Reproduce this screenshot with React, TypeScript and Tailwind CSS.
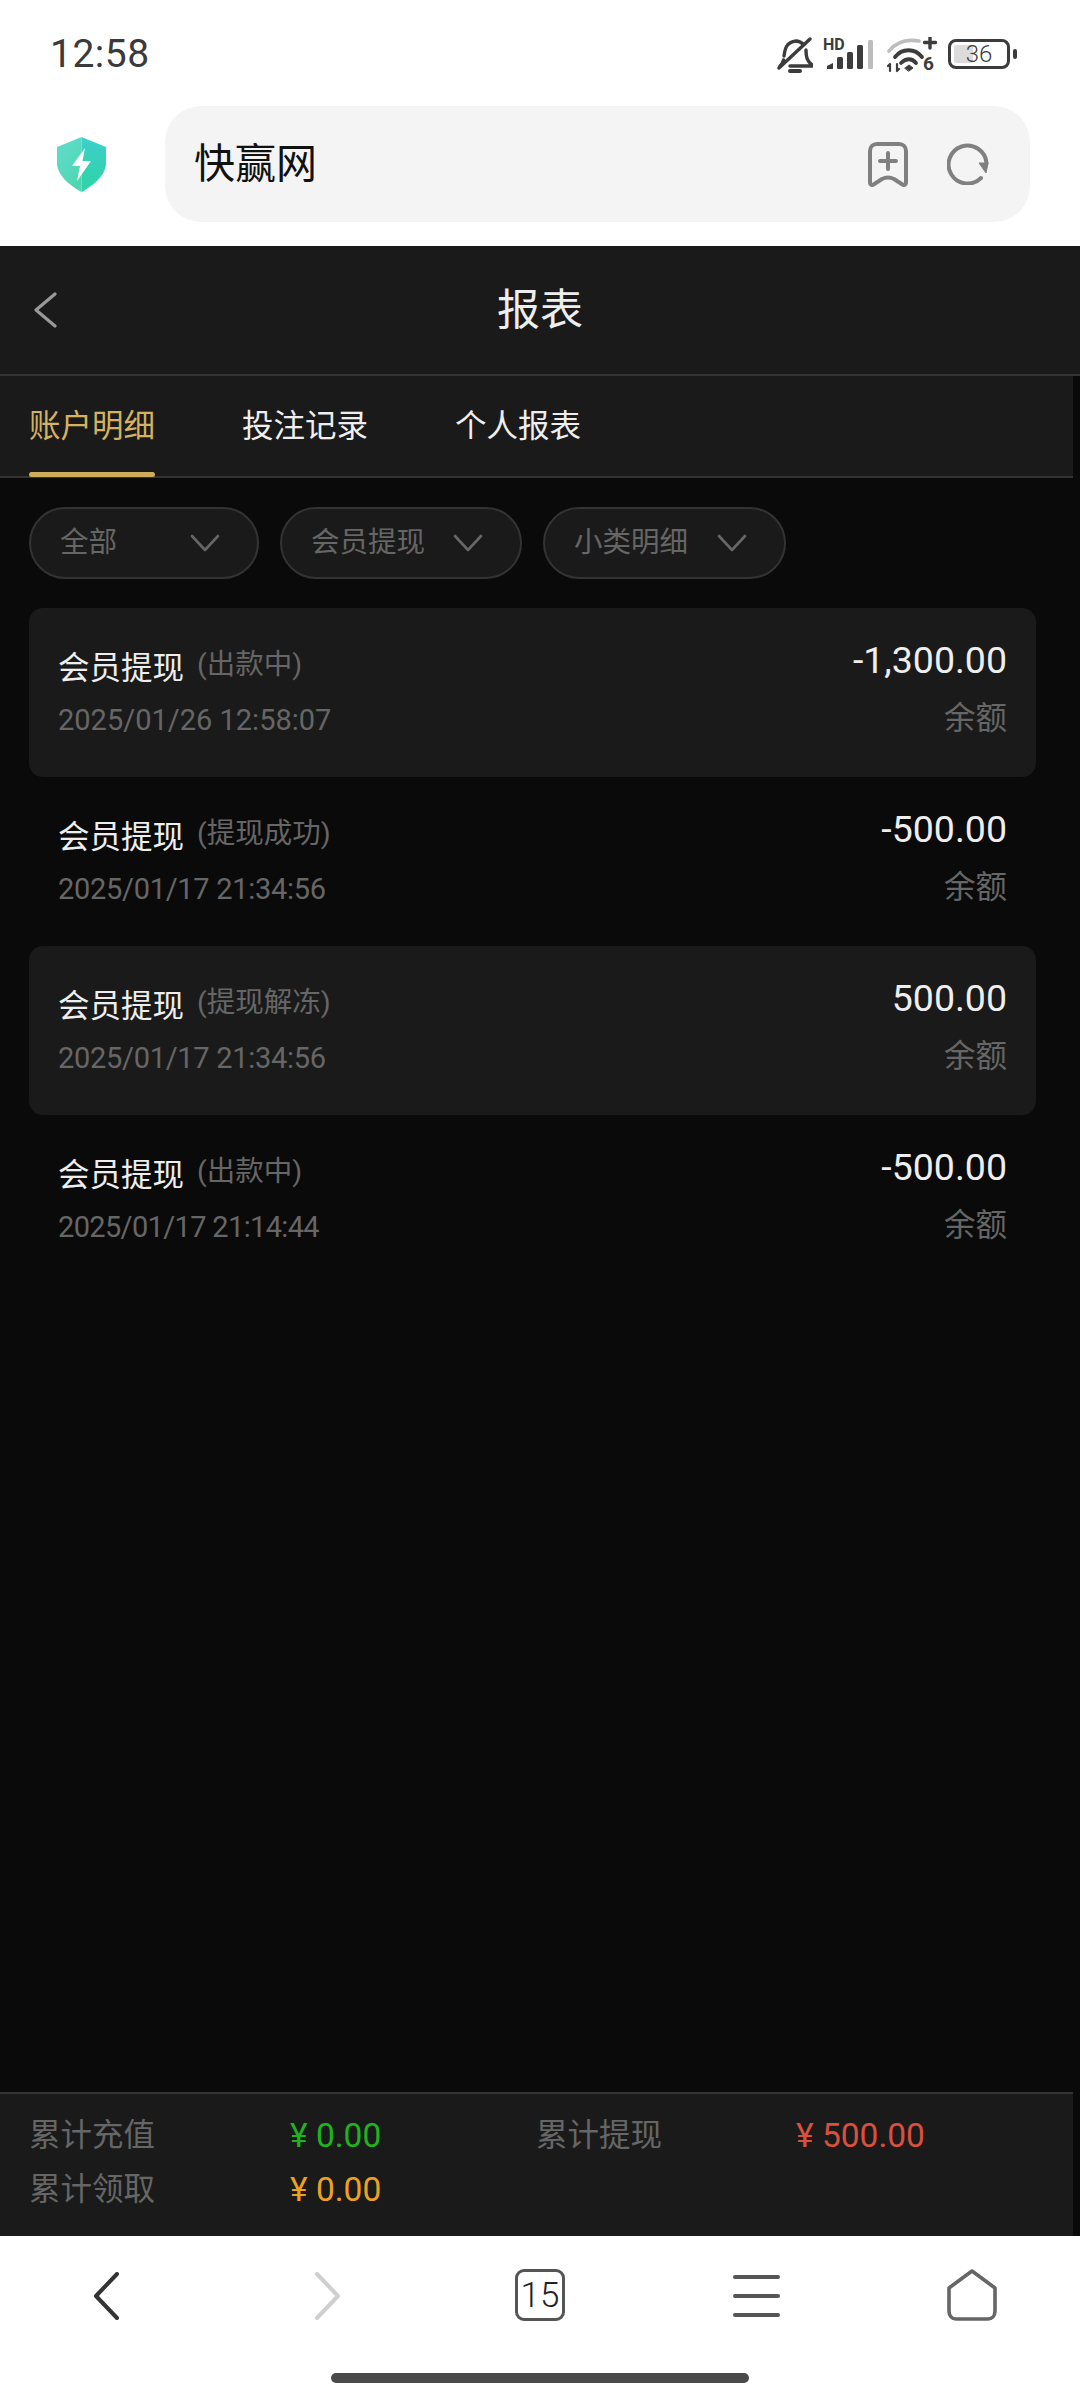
import React from 'react';

const records = [
  { status: '(出款中)', time: '2025/01/26 12:58:07', timeTrack: 'tracking-[0px]', amount: '-1,300.00', shaded: true },
  { status: '(提现成功)', time: '2025/01/17 21:34:56', timeTrack: 'tracking-[-0.3px]', amount: '-500.00', shaded: false },
  { status: '(提现解冻)', time: '2025/01/17 21:34:56', timeTrack: 'tracking-[-0.3px]', amount: '500.00', shaded: true },
  { status: '(出款中)', time: '2025/01/17 21:14:44', timeTrack: 'tracking-[-0.65px]', amount: '-500.00', shaded: false },
];

const Chevron: React.FC = () => (
  <svg width="30" height="18" viewBox="0 0 30 18" fill="none" stroke="#666" strokeWidth="2.6" strokeLinecap="round" strokeLinejoin="round">
    <path d="M2 2 L15 16 L28 2" />
  </svg>
);

const StatusIcons: React.FC = () => (
  <div className="flex items-start">
    {/* muted bell */}
    <svg width="36" height="37" viewBox="0 0 36 37" fill="none" stroke="#3c3c3c" strokeWidth="3.4" strokeLinecap="round" strokeLinejoin="round">
      <path d="M7 19 C8 12 9 5 19 4 C22 4 24 5 26 7" />
      <path d="M29 13 C29 20 30 24 35 28 L35 29 L13 29" />
      <path d="M3 29 L4 28 C5 27 6 25 6.500 23" />
      <path d="M2 31 L33 2" />
      <path d="M13 34 L23 34" strokeWidth="4" />
    </svg>
    {/* signal bars with HD */}
    <div className="relative w-[50px] h-[32px] ml-[10px] mt-[3px]">
      <span className="absolute left-0 top-[-3px] text-[16px] leading-[15px] font-bold text-[#3c3c3c] font-['Roboto',sans-serif]">HD</span>
      <svg className="absolute left-0 top-0" width="50" height="32" viewBox="0 0 50 32" fill="#3c3c3c">
        <path d="M4 26 L10 23 L10 29 L4 29 Z" />
        <rect x="14" y="17" width="6" height="12" rx="1.500" />
        <rect x="24" y="12" width="6" height="17" rx="1.500" />
        <rect x="34" y="5" width="6" height="24" rx="1.500" />
        <rect x="45" y="0" width="5" height="29" rx="1.500" fill="#bdbdbd" />
      </svg>
    </div>
    {/* wifi with transfer arrows */}
    <div className="relative w-[50px] h-[36px] ml-[14px]">
      <svg className="absolute left-0 top-0" width="50" height="36" viewBox="0 0 50 36" fill="none" strokeLinecap="round">
        <path d="M2 14 C10 4 20 2 32 4" stroke="#bdbdbd" strokeWidth="3.600" />
        <path d="M8 20 C15 11 28 11 35 20" stroke="#3c3c3c" strokeWidth="3.800" />
        <path d="M14 26 C19 21 25 21 29 26" stroke="#3c3c3c" strokeWidth="3.800" />
        <path d="M18 31 L22 28 L26 31 L22 34 Z" fill="#3c3c3c" stroke="#3c3c3c" strokeWidth="1" />
        <path d="M43 0 L43 11 M37.500 5.500 L48.500 5.500" stroke="#3c3c3c" strokeWidth="3.400" />
        <path d="M3 27 L3 34 M1 29 L3 27 M10 27 L10 34 M10 34 L12 32" stroke="#3c3c3c" strokeWidth="2.200" />
      </svg>
      <span className="absolute left-[36px] top-[17px] text-[19px] leading-[19px] font-bold text-[#3c3c3c] font-['Roboto',sans-serif]">6</span>
    </div>
    {/* battery */}
    <div className="ml-[11px] mt-[2px] relative w-[62px] h-[30px] rounded-[8px] border-[3px] border-[#3c3c3c] flex items-center justify-center">
      <div className="absolute left-[3px] top-[3px] bottom-[3px] w-[19px] rounded-[2px] bg-[#dcdcdc]" />
      <span className="relative text-[24px] font-light leading-none text-[#3c3c3c] font-['Roboto',sans-serif]">36</span>
    </div>
    <div className="ml-[3px] mt-[12px] w-[4px] h-[10px] rounded-[2px] bg-[#3c3c3c]" />
  </div>
);

export default function App() {
  return (
    <div className="w-[1080px] h-[2400px] flex flex-col bg-white font-['Roboto','Noto_Sans_CJK_SC',sans-serif]">
      {/* browser chrome, top */}
      <div className="h-[246px] shrink-0 flex flex-col">
        <div className="h-[106px] flex items-start justify-between pl-[50px] pr-[63px] pt-[33px]">
          <span className="text-[39px] leading-[42px] text-[#3a3a3a] tracking-[0.5px]">12:58</span>
          <div className="mt-[4px]"><StatusIcons /></div>
        </div>
        <div className="flex items-center pl-[57px]">
          <svg width="49" height="55" viewBox="0 0 49 55" className="shrink-0">
            <defs>
              <linearGradient id="shieldLeft" x1="0" y1="0" x2="0.6" y2="1">
                <stop offset="0" stopColor="#62dbd0" />
                <stop offset="1" stopColor="#4fd8b0" />
              </linearGradient>
              <linearGradient id="shieldRight" x1="0" y1="0" x2="0" y2="1">
                <stop offset="0" stopColor="#3dd0cc" />
                <stop offset="1" stopColor="#2ed3a4" />
              </linearGradient>
            </defs>
            <path d="M24.500 0 L24.500 55 C12 48 0 38 0 26 L0 10 Z" fill="url(#shieldLeft)" />
            <path d="M24.500 0 L49 10 L49 26 C49 38 37 48 24.500 55 Z" fill="url(#shieldRight)" />
            <path d="M28 11 L15 29 L23 29 L20 44 L34 24 L25.500 24 Z" fill="#fff" />
          </svg>
          <div className="ml-[59px] w-[865px] h-[116px] rounded-[36px] bg-[#f4f4f4] flex items-center pl-[29px]">
            <span className="text-[41px] leading-none text-[#111] flex-1">快赢网</span>
            <svg width="40" height="45" viewBox="0 0 40 45" fill="none" stroke="#808080" strokeWidth="4" strokeLinecap="round" strokeLinejoin="round" className="mr-[39px]">
              <path d="M9 2 L31 2 C35 2 38 5 38 9 L38 41 C38 43 36 43.500 34.500 42.500 L26 37 C22 35 18 35 14 37 L5.500 42.500 C4 43.500 2 43 2 41 L2 9 C2 5 5 2 9 2 Z" />
              <path d="M20 11 L20 27 M12 19 L28 19" />
            </svg>
            <svg width="42" height="42" viewBox="0 0 42 42" fill="none" className="mr-[41px]">
              <path d="M34 35 A19 19 0 1 1 39.500 20" stroke="#808080" strokeWidth="4" strokeLinecap="round" />
              <path d="M32 20 L41 20 L39 30 Z" fill="#808080" stroke="#808080" strokeWidth="1" strokeLinejoin="round" />
            </svg>
          </div>
        </div>
      </div>

      {/* page */}
      <div className="flex-1 flex flex-col bg-[#0a0a0a] min-h-0">
        <div className="h-[128px] shrink-0 bg-[#1a1a1a] flex items-center relative">
          <svg width="24" height="36" viewBox="0 0 24 36" fill="none" stroke="#999" strokeWidth="3.200" strokeLinecap="round" strokeLinejoin="round" className="ml-[33px]">
            <path d="M22 2 L3 18 L22 34" />
          </svg>
          <span className="absolute left-0 right-0 text-center text-[43px] leading-none text-[#eee]">报表</span>
        </div>
        <div className="h-[2px] shrink-0 bg-[#333]" />

        {/* tabs */}
        <div className="w-[1073px] h-[102px] shrink-0 bg-[#1a1a1a] border-b-2 border-[#333] flex pl-[29px] gap-[87px] text-[31.5px]">
          <div className="relative h-full flex items-center pt-[2px] text-[#d4b25f]">
            账户明细
            <div className="absolute left-0 right-0 bottom-[-1px] h-[5px] rounded-[3px] bg-[#cfae5b]" />
          </div>
          <div className="h-full flex items-center pt-[2px] text-[#eee]">投注记录</div>
          <div className="h-full flex items-center pt-[2px] text-[#eee]">个人报表</div>
        </div>

        {/* filters */}
        <div className="flex gap-[21px] pl-[29px] pt-[29px] text-[28.5px] text-[#666]">
          <div className="w-[230px] h-[72px] rounded-[36px] bg-[#1a1a1a] border-2 border-[#333] flex items-center justify-between pl-[29px] pr-[37px]">
            <span>全部</span><Chevron />
          </div>
          <div className="w-[242px] h-[72px] rounded-[36px] bg-[#1a1a1a] border-2 border-[#333] flex items-center justify-between pl-[29px] pr-[37px]">
            <span>会员提现</span><Chevron />
          </div>
          <div className="w-[243px] h-[72px] rounded-[36px] bg-[#1a1a1a] border-2 border-[#333] flex items-center justify-between pl-[29px] pr-[37px]">
            <span>小类明细</span><Chevron />
          </div>
        </div>

        {/* records */}
        <div className="mt-[29px] pl-[29px] w-[1036px] flex flex-col">
          {records.map((r, i) => (
            <div key={i} className={`h-[169px] rounded-[14px] pl-[29px] pr-[29px] pt-[32px] flex justify-between ${r.shaded ? 'bg-[#1a1a1a]' : ''}`}>
              <div>
                <div className="flex items-start h-[54px] pt-[2px]">
                  <span className="text-[31.5px] leading-[54px] text-[#eee]">会员提现</span>
                  <span className="ml-[13px] text-[28.5px] leading-[46px] text-[#666]">{r.status}</span>
                </div>
                <div className={`text-[29px] leading-[32px] mt-[10px] text-[#666] ${r.timeTrack}`}>{r.time}</div>
              </div>
              <div className="flex flex-col items-end">
                <span className="text-[37.5px] leading-[40px] text-[#eee]">{r.amount}</span>
                <span className="text-[31.5px] leading-[32px] mt-[23px] text-[#666]">余额</span>
              </div>
            </div>
          ))}
        </div>

        {/* totals */}
        <div className="mt-auto w-[1073px] h-[144px] shrink-0 bg-[#1a1a1a] border-t-2 border-[#333] pl-[29px] pt-[15px] grid grid-cols-[261px_246px_260px_1fr] grid-rows-[54px_54px] items-center text-[31.5px] text-[#666]">
          <span>累计充值</span>
          <span className="text-[33.5px] text-[#1fb31f]">¥ 0.00</span>
          <span>累计提现</span>
          <span className="text-[33.5px] text-[#d9503f]">¥ 500.00</span>
          <span>累计领取</span>
          <span className="text-[33.5px] text-[#eda21f]">¥ 0.00</span>
        </div>
      </div>

      {/* browser toolbar, bottom */}
      <div className="h-[164px] shrink-0 flex flex-col items-center">
        <div className="w-full h-[137px] relative flex items-start pt-[36px] pl-[93px]">
          <svg width="26" height="48" viewBox="0 0 26 48" fill="none" stroke="#333" strokeWidth="4" strokeLinecap="round" strokeLinejoin="round">
            <path d="M24 2 L3 24 L24 46" />
          </svg>
          <svg width="26" height="48" viewBox="0 0 26 48" fill="none" stroke="#cfcfcf" strokeWidth="4" strokeLinecap="round" strokeLinejoin="round" className="ml-[196px]">
            <path d="M2 2 L23 24 L2 46" />
          </svg>
          <div className="ml-[174px] mt-[-3px] w-[50px] h-[52px] rounded-[9px] border-[3px] border-[#555] flex items-center justify-center text-[35px] font-light leading-none text-[#222]">15</div>
          <div className="ml-[168px] mt-[3px] w-[47px] h-[42px] flex flex-col justify-between">
            <div className="h-[4px] rounded-[2px] bg-[#555]" />
            <div className="h-[4px] rounded-[2px] bg-[#555]" />
            <div className="h-[4px] rounded-[2px] bg-[#555]" />
          </div>
          <svg width="50" height="52" viewBox="0 0 50 52" fill="none" stroke="#666" strokeWidth="3.600" strokeLinejoin="round" className="ml-[167px] mt-[-3px]">
            <path d="M25 2 L48 19 L48 42 C48 47 45 50 41 50 L9 50 C5 50 2 47 2 42 L2 19 Z" />
          </svg>
        </div>
        <div className="w-[418px] h-[10px] rounded-[5px] bg-[#4a4a4a]" />
      </div>
    </div>
  );
}
